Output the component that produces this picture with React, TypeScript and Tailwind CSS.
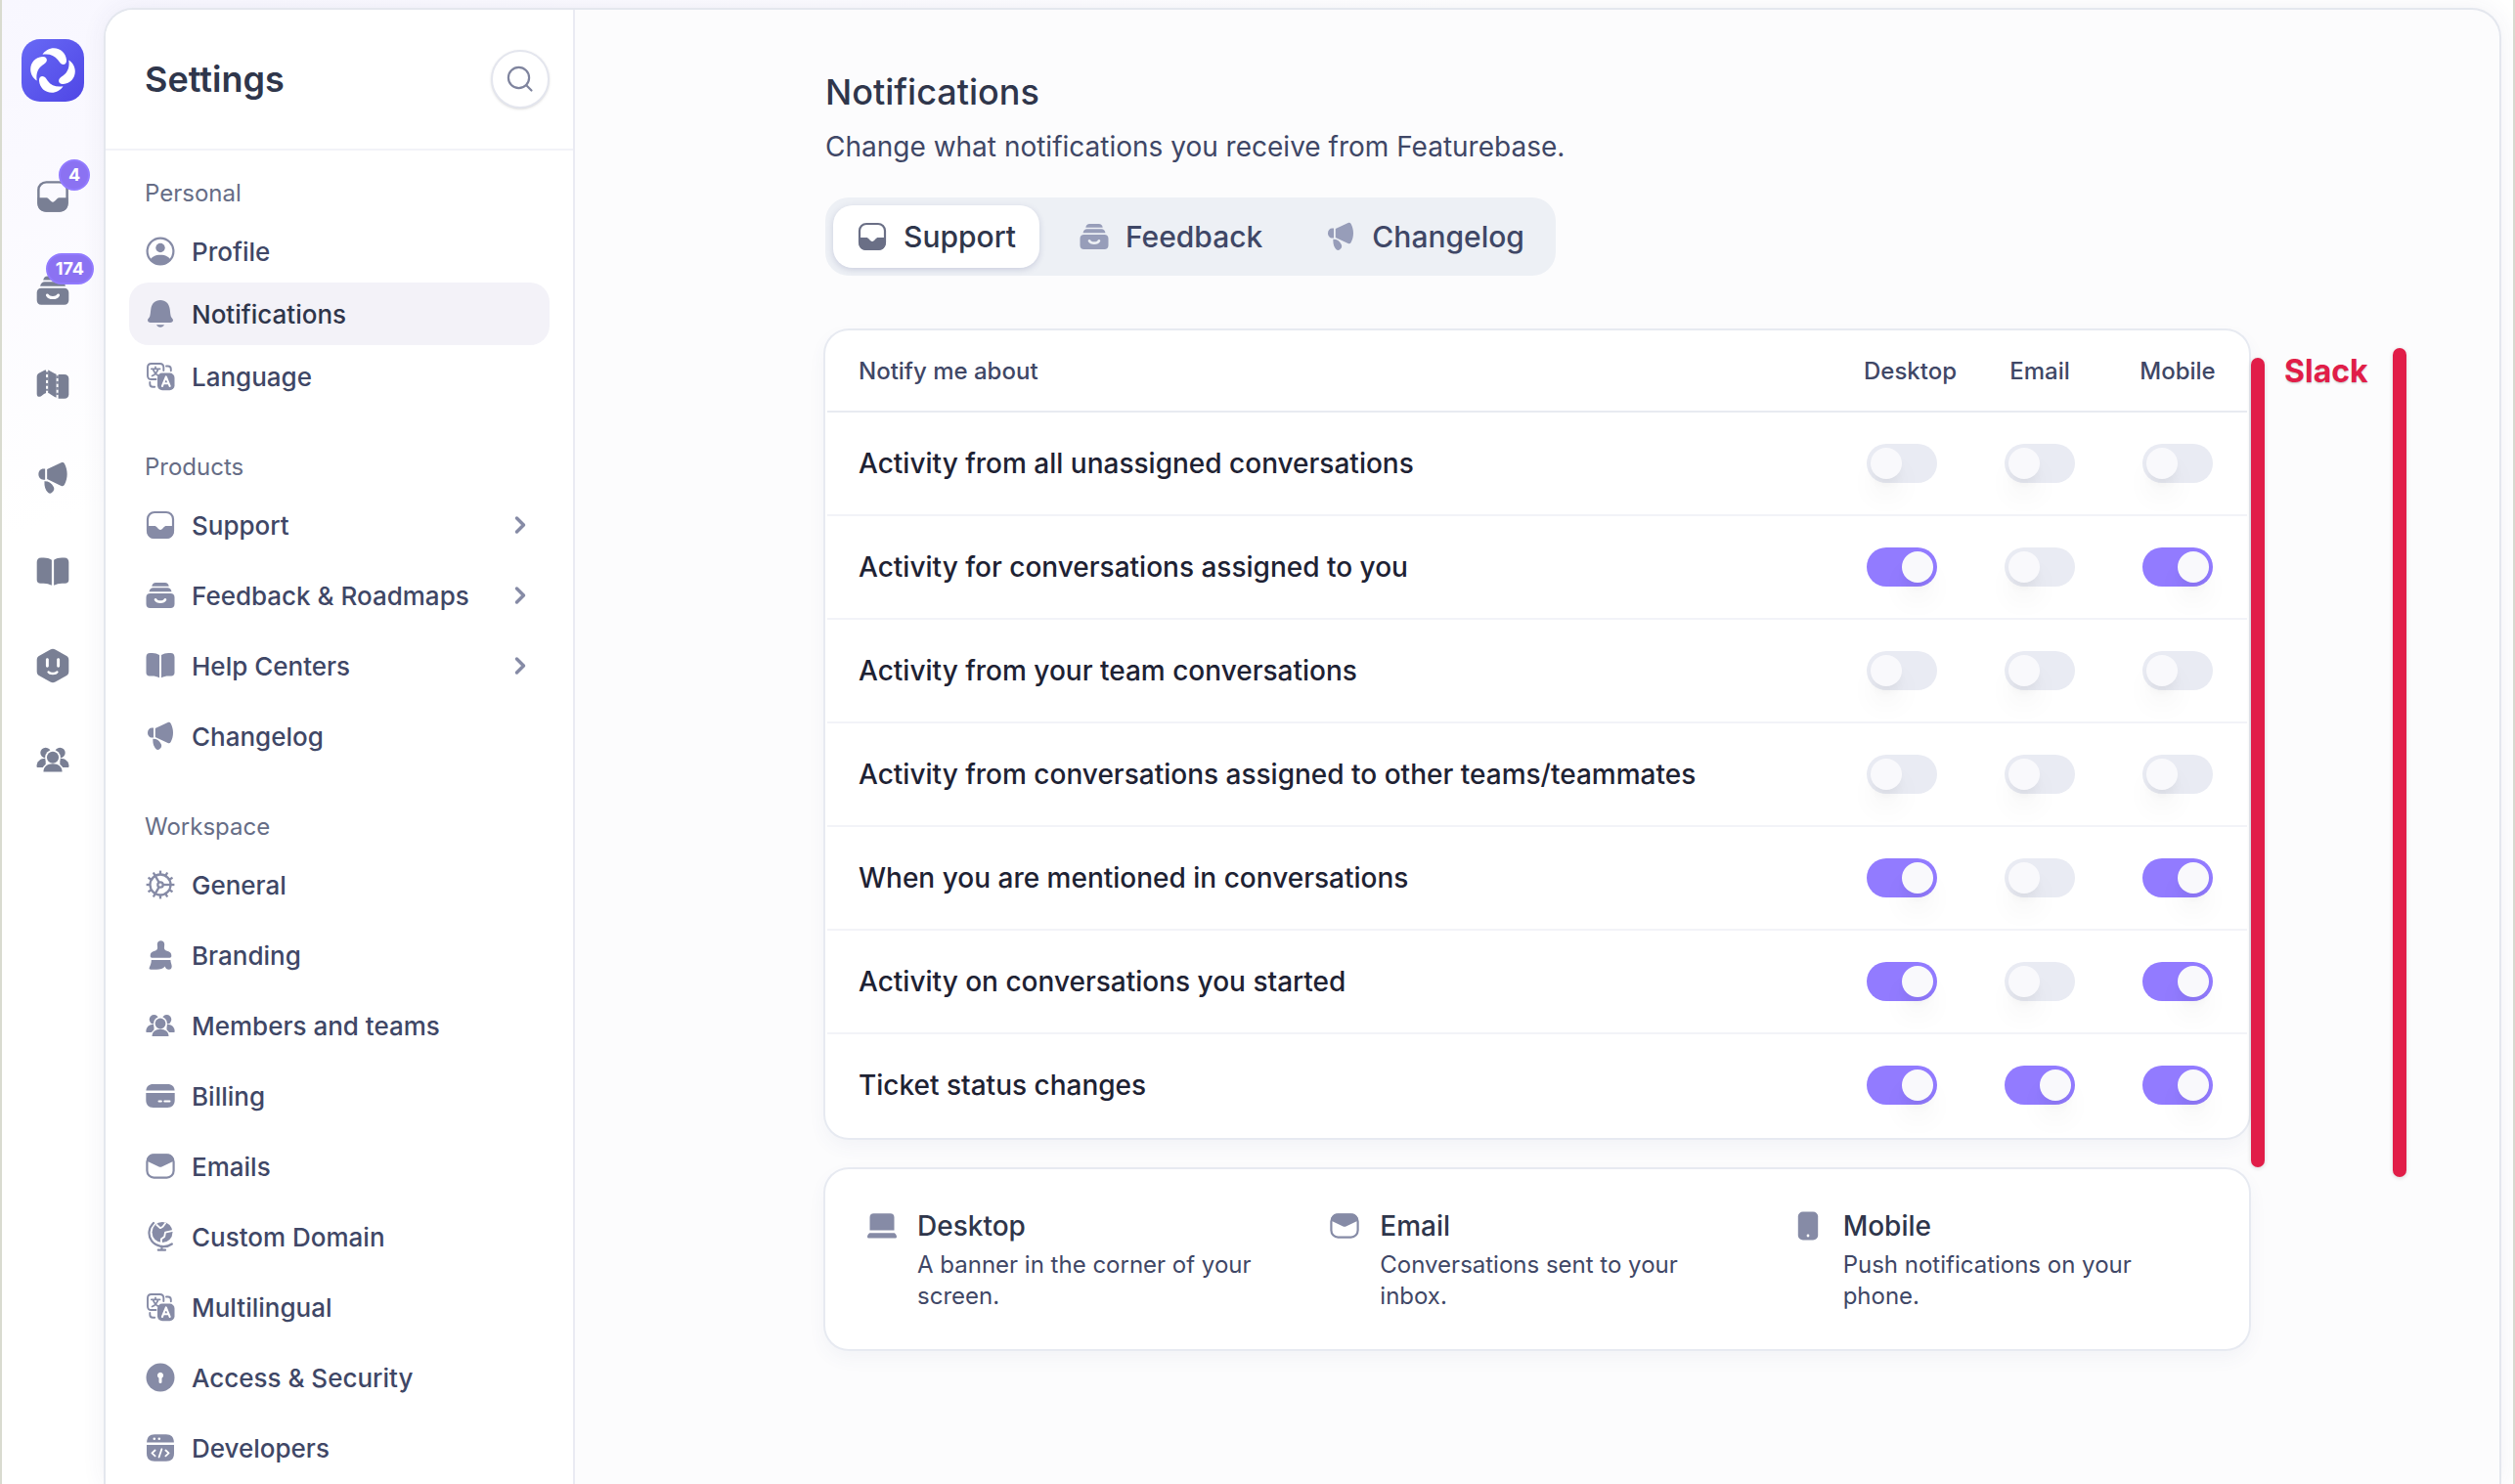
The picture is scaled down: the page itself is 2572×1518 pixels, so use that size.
import React, { useId, useState } from 'react';
import { ChevronRight } from 'lucide-react';

type IconProps = { className?: string };
type IconType = React.FC<IconProps>;

const Svg: React.FC<{ className?: string; children: React.ReactNode }> = ({ className = 'size-8', children }) => (
  <svg viewBox="0 0 32 32" fill="currentColor" className={`shrink-0 ${className}`} aria-hidden="true">
    {children}
  </svg>
);

const InboxIcon: IconType = ({ className }) => (
  <Svg className={className}>
    <rect x="3" y="3" width="26" height="26" rx="7" fill="none" stroke="currentColor" strokeWidth="2.2" />
    <path d="M2.2 17h7.6c1.4 0 2 .6 2.9 1.6 1.1 1.2 2.2 2.4 3.3 2.4s2.2-1.2 3.3-2.4c.9-1 1.5-1.6 2.9-1.6h7.6v5.5c0 4.5-3 7.5-7.5 7.5H9.700c-4.500 0-7.500-3-7.500-7.500z" />
  </Svg>
);

const DrawerIcon: IconType = ({ className }) => (
  <Svg className={className}>
    <path d="M7.3 6.7C7.8 4.300 9 3 11.200 3h9.600c2.200 0 3.400 1.300 3.900 3.700z" />
    <path d="M4.5 12.300c.6-2.600 1.900-4 4.200-4h14.600c2.300 0 3.600 1.400 4.200 4z" />
    <path
      fillRule="evenodd"
      d="M5.5 14h21c2.400 0 4 1.600 4 4v7c0 2.400-1.600 4-4 4h-21c-2.400 0-4-1.600-4-4v-7c0-2.400 1.600-4 4-4zm5 5.200c-.8.400-1 1.200-.6 1.900 1 2 3.100 3 6.100 3s5.100-1 6.100-3c.4-.7.200-1.500-.6-1.900-.7-.4-1.400-.1-1.800.600-.6 1.100-1.800 1.500-3.700 1.500s-3.100-.4-3.700-1.500c-.4-.7-1.100-1-1.800-.6z"
    />
  </Svg>
);

const MapIcon: IconType = ({ className }) => (
  <Svg className={className}>
    <path d="M1.5 9.500c0-1.800.6-2.800 2.200-3.700l4.300-2.300c.7-.4 1.300-.5 1.800-.5v21c-.6.100-1.200.500-1.800.900l-2.600 1.900c-2 1.300-3.900.4-3.900-2z" />
    <path d="M11.7 3.200c.6.100 1.200.400 1.800.7l4.500 2.500c.4.200.8.300 1.200.4v21.400c-.6-.1-1.300-.4-1.900-.8l-3.900-2.600c-.6-.4-1.100-.7-1.700-.8z" />
    <path d="M21 7h5.500c2.500 0 4 1.400 4 4v14c0 2.600-1.500 4-4 4H21z" />
    <path
      d="M10.750 4.600v2.600M10.750 9.800v2.600M10.750 15v2.600M10.750 20.200v1.800M20.100 8.300v2.300M20.100 13.300v2.500M20.100 18.600v2.500M20.100 23.800v2"
      stroke="currentColor"
      strokeWidth="2.200"
      opacity=".9"
    />
  </Svg>
);

const MegaphoneIcon: IconType = ({ className }) => (
  <Svg className={className}>
    <path d="M9 7.500v10H7.500C4.800 17.500 3 15.400 3 12.500s1.800-5 4.500-5z" />
    <path d="M10.800 8.100 23.600 2c1.300-.6 2.400-.3 3 .9 1.600 3 2.400 6.200 2.400 9.600s-.8 6.600-2.400 9.600c-.6 1.200-1.700 1.500-3 .9l-12.800-6.100z" />
    <path d="M8.400 18.800c3.900-.1 6.500 1.600 8.300 5.300.8 1.700.6 2.900-.5 4.100l-1 1c-1.100 1.100-2.500 1.100-3.600 0-2.300-2.300-3.500-5.800-3.200-10.400z" />
  </Svg>
);

const BookIcon: IconType = ({ className }) => (
  <Svg className={className}>
    <path d="M1.500 7.200C1.500 4.500 2.800 3 5.500 3h2.300c2.800 0 5.100.7 7.200 2v23.300c-2.300-1.300-4.600-1.900-7.400-1.900H4.900c-2.200 0-3.400-1.200-3.400-3.400z" />
    <path d="M30.500 7.200c0-2.700-1.300-4.200-4-4.200h-2.300c-2.800 0-5.100.7-7.200 2v23.300c2.300-1.300 4.600-1.900 7.400-1.900h2.700c2.200 0 3.400-1.200 3.400-3.400z" />
  </Svg>
);

const BotIcon: IconType = ({ className }) => (
  <Svg className={className}>
    <path
      fillRule="evenodd"
      d="M13.700 1.300c1.600-.9 3-.9 4.600 0l9.900 5.600c1.600.9 2.300 2.100 2.300 4v10.200c0 1.900-.7 3.100-2.300 4l-9.900 5.600c-1.600.9-3 .9-4.600 0l-9.900-5.600c-1.600-.9-2.300-2.100-2.300-4V10.900c0-1.900.7-3.100 2.300-4zM11 9c-.8 0-1.300.5-1.300 1.300v6c0 .8.500 1.300 1.300 1.300s1.300-.5 1.300-1.300v-6C12.300 9.500 11.800 9 11 9zm10 0c-.8 0-1.300.5-1.300 1.300v6c0 .8.500 1.300 1.300 1.300s1.300-.5 1.300-1.300v-6C22.300 9.500 21.800 9 21 9zM11.600 20.800c-.6.300-.8.900-.4 1.500.9 1.300 2.500 2 4.800 2s3.900-.7 4.800-2c.4-.6.200-1.200-.4-1.500-.5-.3-1.100-.1-1.500.3-.6.600-1.500.9-2.900.9s-2.300-.3-2.900-.9c-.4-.4-1-.6-1.500-.3z"
    />
  </Svg>
);

const PeopleIcon: IconType = ({ className }) => {
  const id = useId();
  return (
    <Svg className={className}>
      <mask id={id}>
        <rect width="32" height="32" fill="white" />
        <circle cx="16" cy="14" r="7" fill="black" />
        <path d="M5.500 28.500c0-6 4.500-10 10.500-10s10.500 4 10.500 10z" fill="black" />
      </mask>
      <g mask={`url(#${id})`}>
        <circle cx="9.500" cy="9.800" r="4.800" />
        <circle cx="22.500" cy="9.800" r="4.800" />
        <path d="M1.300 22.400c0-4.500 2.900-7.600 8.200-7.600v8.200H2z" />
        <path d="M30.700 22.400c0-4.500-2.900-7.600-8.200-7.600v8.200H30z" />
      </g>
      <circle cx="16" cy="14" r="5.400" />
      <path d="M7.500 27c0-4.200 3.300-7.200 8.500-7.200s8.500 3 8.500 7.200z" />
    </Svg>
  );
};

const ProfileIcon: IconType = ({ className }) => {
  const id = useId();
  return (
    <Svg className={className}>
      <clipPath id={id}>
        <circle cx="16" cy="16" r="14" />
      </clipPath>
      <circle cx="16" cy="16" r="13.400" fill="none" stroke="currentColor" strokeWidth="2.200" />
      <circle cx="16" cy="12.500" r="4.700" />
      <path clipPath={`url(#${id})`} d="M5 30v-4.500c2-3.800 5.800-5.800 11-5.800s9 2 11 5.800V30z" />
    </Svg>
  );
};

const BellIcon: IconType = ({ className }) => (
  <Svg className={className}>
    <path d="M16 2c5.400 0 9 3.700 9.700 9.200.4 3 .5 5.700 1.200 7.700.5 1.300 2.100 1.900 2.100 3.700 0 1.600-1.200 2.400-3 2.400H6c-1.800 0-3-.8-3-2.400 0-1.800 1.600-2.400 2.100-3.700.7-2 .8-4.700 1.200-7.700C7 5.700 10.600 2 16 2z" />
    <path d="M12 27.300h8c-.8 1.600-2.100 2.400-4 2.400s-3.200-.8-4-2.400z" />
  </Svg>
);

const TranslateIcon: IconType = ({ className }) => (
  <Svg className={className}>
    <g fill="none" stroke="currentColor" strokeWidth="1.900" strokeLinecap="round" strokeLinejoin="round">
      <path d="M11.500 19H6.800C4.300 19 3 17.700 3 15.200V6.800C3 4.300 4.300 3 6.800 3h8.700c2.500 0 3.800 1.300 3.800 3.800V10" />
      <path d="M11 6.300v1.500M6.800 8.300h8.800M13.700 8.500c-1 3.400-3.200 5.900-6.200 7M8.500 8.500c1 3.400 3.200 5.900 6.200 7" strokeWidth="1.700" />
      <path d="M22 5.500h1.800c2 0 3 1 3 3v1.800M5.300 22v1.800c0 2 1 3 3 3h1.900" />
    </g>
    <rect x="13" y="12.500" width="17.500" height="17.800" rx="5" />
    <path d="m17.900 26 3.900-9.600 3.900 9.600M19.300 23.300h5" fill="none" stroke="white" strokeWidth="2" strokeLinecap="round" strokeLinejoin="round" />
  </Svg>
);

const TEETH = [0, 30, 60, 90, 120, 150, 180, 210, 240, 270, 300, 330];

const GearIcon: IconType = ({ className }) => (
  <Svg className={className}>
    <g fill="none" stroke="currentColor" strokeWidth="2.300">
      <circle cx="16" cy="16" r="10.500" />
      <circle cx="16" cy="16" r="2.700" />
      {TEETH.map((deg) => (
        <path key={deg} d="M26.500 16h3.900" transform={`rotate(${deg} 16 16)`} />
      ))}
      {[0, 120, 240].map((deg) => (
        <path key={deg} d="M18.700 16h7.500" transform={`rotate(${deg} 16 16)`} />
      ))}
    </g>
  </Svg>
);

const BrushIcon: IconType = ({ className }) => (
  <Svg className={className}>
    <path d="M16.500 1.300c2.100 0 3.700 1.500 3.700 3.700 0 1.200-.3 2.200-.3 3.200 0 2 .9 2.900 3 3.500 3.100.9 4.400 2.400 4.400 4.700v.7c0 1-.7 1.700-1.700 1.700H7.400c-1 0-1.700-.7-1.700-1.700v-.7c0-2.300 1.300-3.800 4.400-4.700 2.100-.6 3-1.500 3-3.500 0-1-.3-2-.3-3.200 0-2.200 1.600-3.700 3.700-3.700z" />
    <path d="M6.800 20.900h19.600c0 2.600 1.300 4.400 1.300 6.500 0 2-1.100 3.300-2.900 3.300-2.300 0-3.300-1-4.100-3.200-1.700 2.300-4.900 3.200-8.700 3.200H6.300c-1.500 0-2.100-1-1.500-2.300.9-2 2-4.400 2-7.500z" />
  </Svg>
);

const CardIcon: IconType = ({ className }) => (
  <Svg className={className}>
    <path d="M1.400 10.400C1.700 6.300 4.300 4 8.600 4h14.800c4.300 0 6.900 2.300 7.200 6.400z" />
    <path d="M1.300 12.900h29.400v7.400c0 4.900-2.700 7.700-7.500 7.700H8.800c-4.800 0-7.500-2.800-7.500-7.700z" />
    <path d="M14.500 21.600h2.400M20.300 21.600h5.200" stroke="white" strokeWidth="2" strokeLinecap="round" />
  </Svg>
);

const MailIcon: IconType = ({ className }) => (
  <Svg className={className}>
    <rect x="2.400" y="4.400" width="27.200" height="23.200" rx="7" fill="none" stroke="currentColor" strokeWidth="2.200" />
    <path d="M1.900 10.500C2.200 6.200 4.700 3.500 9 3.500h14c4.300 0 6.800 2.700 7.100 7L18 16.300c-1.400.7-2.600.7-4 0z" />
  </Svg>
);

const GlobeIcon: IconType = ({ className }) => (
  <Svg className={className}>
    <circle cx="18" cy="11.500" r="10.500" />
    <path d="M11.800 3.500 16 7.200l2.500-1.500 3-4M29 9.800l-8 1.800-.8 4.400-3.400 2.400.3 4" fill="none" stroke="white" strokeWidth="1.800" strokeLinejoin="round" />
    <path d="M9 2c-5.200 5-6 12.600-2 18.200s13.800 8.300 20.800 3.300M17.400 25.800v3.500M13.800 29.700h7.200" fill="none" stroke="currentColor" strokeWidth="2.200" strokeLinecap="round" />
  </Svg>
);

const KeyholeIcon: IconType = ({ className }) => (
  <Svg className={className}>
    <circle cx="16" cy="16" r="14.500" />
    <path d="M16 10.800a3.200 3.200 0 0 1 1.500 6v3.700a1.500 1.500 0 0 1-3 0v-3.700a3.200 3.200 0 0 1 1.500-6z" fill="white" />
  </Svg>
);

const CodeIcon: IconType = ({ className }) => (
  <Svg className={className}>
    <path d="M2.100 10.600c.2-5.500 2.700-8.300 8-8.300h11.800c5.300 0 7.800 2.800 8 8.300z" />
    <path d="M2 13h28v8.500c0 5.500-2.700 8.200-8.100 8.200H10.100C4.700 29.700 2 27 2 21.500z" />
    <circle cx="9.800" cy="6.800" r="1.300" fill="white" />
    <circle cx="14.800" cy="6.800" r="1.300" fill="white" />
    <path d="m10.600 18.500-3.200 2.900 3.200 2.900M21.400 18.500l3.200 2.900-3.200 2.900M17.400 17.300l-2.800 8.200" fill="none" stroke="white" strokeWidth="1.800" strokeLinecap="round" strokeLinejoin="round" />
  </Svg>
);

const LaptopIcon: IconType = ({ className }) => (
  <Svg className={className}>
    <path d="M7.500 3.300h17c2.500 0 4 1.500 4 4v13.300h-25V7.300c0-2.500 1.500-4 4-4z" />
    <path d="M3.300 23.300h25.400c1.300 1 2.300 2.500 2.300 3.800 0 1-.7 1.500-1.700 1.500H2.700C1.700 28.600 1 28.100 1 27.100c0-1.300 1-2.800 2.300-3.800z" />
  </Svg>
);

const PhoneIcon: IconType = ({ className }) => (
  <Svg className={className}>
    <rect x="5.800" y="1.500" width="20.400" height="29" rx="5" />
    <circle cx="16" cy="26" r="1.400" fill="white" />
  </Svg>
);

const Logo: React.FC = () => (
  <svg viewBox="0 0 64 64" className="size-16" aria-hidden="true">
    <defs>
      <linearGradient id="logo-fill" x1="0" y1="0" x2="1" y2="1">
        <stop offset="0" stopColor="#6869f5" />
        <stop offset="1" stopColor="#4f46e5" />
      </linearGradient>
    </defs>
    <rect width="64" height="64" rx="19" fill="url(#logo-fill)" />
    {[0, 90, 180, 270].map((deg) => (
      <path
        key={deg}
        fill="white"
        transform={`rotate(${deg} 32 32)`}
        d="M21.500 15.700C24 11.600 28.500 9.200 33 9.200c7 0 12.400 5 13 12 .3 3-1.300 4.800-3.500 4.700-2.400-.1-3.300-1.900-5.300-4.600-3.700-5-9-6.600-15.700-5.600z"
      />
    ))}
  </svg>
);

const RAIL: { label: string; icon: IconType; badge?: string }[] = [
  { label: 'Inbox', icon: InboxIcon, badge: '4' },
  { label: 'Feedback', icon: DrawerIcon, badge: '174' },
  { label: 'Roadmap', icon: MapIcon },
  { label: 'Changelog', icon: MegaphoneIcon },
  { label: 'Help center', icon: BookIcon },
  { label: 'Assistant', icon: BotIcon },
  { label: 'Users', icon: PeopleIcon },
];

type NavItem = { label: string; icon: IconType; expandable?: boolean };

const SECTIONS: { title: string; compact?: boolean; items: NavItem[] }[] = [
  {
    title: 'Personal',
    compact: true,
    items: [
      { label: 'Profile', icon: ProfileIcon },
      { label: 'Notifications', icon: BellIcon },
      { label: 'Language', icon: TranslateIcon },
    ],
  },
  {
    title: 'Products',
    items: [
      { label: 'Support', icon: InboxIcon, expandable: true },
      { label: 'Feedback & Roadmaps', icon: DrawerIcon, expandable: true },
      { label: 'Help Centers', icon: BookIcon, expandable: true },
      { label: 'Changelog', icon: MegaphoneIcon },
    ],
  },
  {
    title: 'Workspace',
    items: [
      { label: 'General', icon: GearIcon },
      { label: 'Branding', icon: BrushIcon },
      { label: 'Members and teams', icon: PeopleIcon },
      { label: 'Billing', icon: CardIcon },
      { label: 'Emails', icon: MailIcon },
      { label: 'Custom Domain', icon: GlobeIcon },
      { label: 'Multilingual', icon: TranslateIcon },
      { label: 'Access & Security', icon: KeyholeIcon },
      { label: 'Developers', icon: CodeIcon },
    ],
  },
];

const TABS: { label: string; icon: IconType }[] = [
  { label: 'Support', icon: InboxIcon },
  { label: 'Feedback', icon: DrawerIcon },
  { label: 'Changelog', icon: MegaphoneIcon },
];

const CHANNELS = ['Desktop', 'Email', 'Mobile'];

const INITIAL_ROWS = [
  { label: 'Activity from all unassigned conversations', on: [false, false, false] },
  { label: 'Activity for conversations assigned to you', on: [true, false, true] },
  { label: 'Activity from your team conversations', on: [false, false, false] },
  { label: 'Activity from conversations assigned to other teams/teammates', on: [false, false, false] },
  { label: 'When you are mentioned in conversations', on: [true, false, true] },
  { label: 'Activity on conversations you started', on: [true, false, true] },
  { label: 'Ticket status changes', on: [true, true, true] },
];

const CHANNEL_INFO: { label: string; text: string; icon: IconType }[] = [
  { label: 'Desktop', text: 'A banner in the corner of your screen.', icon: LaptopIcon },
  { label: 'Email', text: 'Conversations sent to your inbox.', icon: MailIcon },
  { label: 'Mobile', text: 'Push notifications on your phone.', icon: PhoneIcon },
];

const Rail: React.FC = () => (
  <nav className="flex w-26 shrink-0 flex-col items-center pt-10" aria-label="Main">
    <a href="#home" aria-label="Home">
      <Logo />
    </a>
    <ul className="mt-[49px] flex flex-col">
      {RAIL.map(({ label, icon: Icon, badge }) => (
        <li key={label}>
          <a href={`#${label}`} aria-label={label} className="relative flex h-24 w-16 items-center justify-center text-[#797f94]">
            <Icon className="size-9" />
            {badge && (
              <span
                className={`absolute top-2.5 flex h-8 min-w-8 items-center justify-center rounded-full border-2 border-[#927bff] bg-[#8b72f2] text-lg font-bold text-white ${
                  badge.length > 1 ? '-right-2.5 px-2' : '-right-1.5'
                }`}
              >
                {badge}
              </span>
            )}
          </a>
        </li>
      ))}
    </ul>
  </nav>
);

const Sidebar: React.FC = () => (
  <aside className="w-120 shrink-0 border-r-2 border-[#eaebf3] bg-white">
    <header className="flex h-36 items-center justify-between border-b-2 border-[#f2f3f8] pl-10 pr-6">
      <h1 className="text-4xl font-semibold text-[#2f364b]">Settings</h1>
      <button type="button" aria-label="Search" className="flex size-15 items-center justify-center rounded-full border-2 border-[#e4e6ee] bg-white text-[#7f849e] shadow-sm">
        <svg viewBox="0 0 32 32" className="size-8" fill="none" stroke="currentColor" strokeWidth="2.200" strokeLinecap="round" aria-hidden="true">
          <circle cx="14.500" cy="14.500" r="10.600" />
          <path d="m22.300 22.300 5.200 5.200" />
        </svg>
      </button>
    </header>
    <nav className="flex flex-col gap-[45px] px-6 pt-7" aria-label="Settings">
      {SECTIONS.map((section) => (
        <section key={section.title}>
          <h2 className="px-4 text-2xl text-[#666d86]">{section.title}</h2>
          <ul className={section.compact ? 'mt-[11px] flex flex-col' : 'mt-[11px] flex flex-col gap-2'}>
            {section.items.map(({ label, icon: Icon, expandable }) => {
              const active = label === 'Notifications';
              return (
                <li key={label}>
                  <a
                    href={`#${label}`}
                    aria-current={active ? 'page' : undefined}
                    className={`flex h-16 items-center gap-4 rounded-[20px] px-4 text-[26px] font-medium ${
                      active ? 'bg-[#f3f2f8] text-[#2f364b]' : 'text-[#3f4766]'
                    }`}
                  >
                    <Icon className="size-8 text-[#868ba6]" />
                    <span className="grow">{label}</span>
                    {expandable && <ChevronRight className="size-7 text-[#868ba6]" strokeWidth={3} />}
                  </a>
                </li>
              );
            })}
          </ul>
        </section>
      ))}
    </nav>
  </aside>
);

const Toggle: React.FC<{ label: string; checked: boolean; onChange: () => void }> = ({ label, checked, onChange }) => (
  <input
    type="checkbox"
    role="switch"
    aria-label={label}
    checked={checked}
    onChange={onChange}
    className="block h-10 w-18 cursor-pointer appearance-none rounded-full bg-[#e9ebf3] p-1 before:block before:size-8 before:rounded-full before:bg-[#f9f9fc] before:shadow-[0_20px_30px_-6px_rgba(0,0,0,0.1),0_8px_12px_-4px_rgba(0,0,0,0.06)] before:transition-transform before:content-[''] checked:bg-[#927bff] checked:before:translate-x-8"
  />
);

// Proposed extra channel, marked up next to the table
const SlackNote: React.FC = () => (
  <div className="pointer-events-none absolute -bottom-10 left-full top-[18px] ml-0.5 flex gap-5 text-[#e11d48]">
    <div className="my-2.5 w-3.5 rounded-full bg-[#e11d48] drop-shadow-sm" />
    <p className="w-[91px] text-[32px] font-bold leading-12 text-shadow-sm">Slack</p>
    <div className="w-3.5 rounded-full bg-[#e11d48] drop-shadow-sm" />
  </div>
);

export default function App() {
  const [tab, setTab] = useState('Support');
  const [rows, setRows] = useState(INITIAL_ROWS);

  const toggle = (row: number, col: number) =>
    setRows((prev) => prev.map((r, i) => (i === row ? { ...r, on: r.on.map((v, j) => (j === col ? !v : v)) } : r)));

  return (
    <div className="flex min-h-screen border-x-2 border-[#d9dbd0] bg-[linear-gradient(160deg,#f8f7ff_0px,#faf9ff_160px,#ffffff_520px)] font-[Inter,sans-serif]">
      <Rail />
      <div className="mr-3 mt-2 flex grow overflow-hidden rounded-t-[30px] border-2 border-b-0 border-[#e4e7ee] bg-[#fcfcfd] shadow-[0_0_24px_rgba(60,60,110,0.07)]">
        <Sidebar />
        <main className="grow pt-16">
          <div className="mx-auto max-w-[1456px]">
            <h2 className="text-4xl font-medium text-[#2f364b]">Notifications</h2>
            <p className="mt-4 text-[28px] leading-10 text-[#3f4766]">Change what notifications you receive from Featurebase.</p>

            <div role="tablist" className="mt-8 inline-flex gap-4 rounded-3xl bg-[#edf0f5] p-2">
              {TABS.map(({ label, icon: Icon }) => (
                <button
                  key={label}
                  type="button"
                  role="tab"
                  aria-selected={tab === label}
                  onClick={() => setTab(label)}
                  className={`flex h-16 items-center gap-4 rounded-[20px] px-6 text-[30px] font-medium ${
                    tab === label
                      ? 'bg-white text-[#2f364b] shadow-[0_2px_6px_rgba(80,85,140,0.22)]'
                      : 'text-[#3f4766]'
                  }`}
                >
                  <Icon className={tab === label ? 'size-8 text-[#6a6f86]' : 'size-8 text-[#979db9]'} />
                  {label}
                </button>
              ))}
            </div>

            <div className="relative mt-14">
              <div className="rounded-3xl bg-white px-0.5 pb-[3px] pt-px shadow-[0_0_0_2px_#e7eaf1,0_8px_20px_rgba(70,80,130,0.06)]">
                <table className="w-full table-fixed">
                  <thead>
                    <tr className="h-[82px] border-b-2 border-[#e8ebf1] text-2xl text-[#3f4766]">
                      <th scope="col" className="pl-8 text-left font-medium">Notify me about</th>
                      {CHANNELS.map((channel) => (
                        <th key={channel} scope="col" className="w-[141px] font-medium last:w-[110px]">
                          <div className="w-[78px] whitespace-nowrap text-center">{channel}</div>
                        </th>
                      ))}
                    </tr>
                  </thead>
                  <tbody>
                    {rows.map((row, i) => (
                      <tr key={row.label} className="h-[106px] border-b-2 border-[#f2f3f8] last:h-[104px] last:border-b-0">
                        <th scope="row" className="pl-8 text-left text-[28px] font-medium text-[#1e2233]">{row.label}</th>
                        {CHANNELS.map((channel, j) => (
                          <td key={channel}>
                            <div className="flex w-[78px] justify-center">
                              <Toggle label={`${row.label}: ${channel}`} checked={row.on[j]} onChange={() => toggle(i, j)} />
                            </div>
                          </td>
                        ))}
                      </tr>
                    ))}
                  </tbody>
                </table>
              </div>
              <SlackNote />
            </div>

            <div className="mt-8 grid grid-cols-3 gap-12 rounded-3xl bg-white px-[42px] pb-[38px] pt-10 shadow-[0_0_0_2px_#e7eaf1,0_8px_20px_rgba(70,80,130,0.06)]">
              {CHANNEL_INFO.map(({ label, text, icon: Icon }) => (
                <div key={label} className="flex gap-5">
                  <Icon className="mt-0.5 size-8 text-[#868ba6]" />
                  <div>
                    <h3 className="text-[28px] font-medium leading-9 text-[#2f364b]">{label}</h3>
                    <p className="mt-1.5 text-2xl text-[#3f4766]">{text}</p>
                  </div>
                </div>
              ))}
            </div>
          </div>
        </main>
      </div>
    </div>
  );
}
